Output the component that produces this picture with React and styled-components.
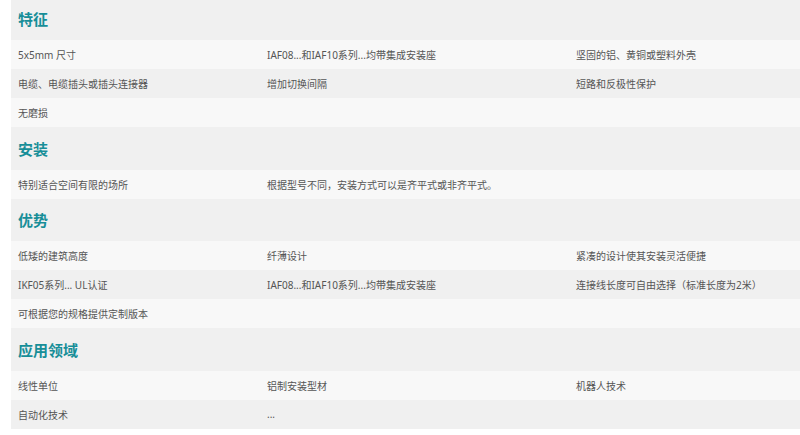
import React from 'react';
import styled, { createGlobalStyle } from 'styled-components';

const GlobalStyle = createGlobalStyle`
  html, body {
    margin: 0;
    padding: 0;
    background: #fff;
    overflow: hidden;
  }
  body {
    font-family: "Noto Sans", "Noto Sans CJK SC", sans-serif;
  }
`;

const Wrapper = styled.div`
  margin: -2.5px 0 0 11px;
  width: 800px;
`;

const SectionHeader = styled.div`
  height: 42.5px;
  display: flex;
  align-items: center;
  padding-left: 7px;
  background: #f0f0f0;
  color: #178e98;
  font-size: 15px;
  font-weight: 700;
  font-family: "Noto Sans CJK SC", sans-serif;
`;

const Row = styled.div`
  display: grid;
  grid-template-columns: 249px 309px 1fr;
  height: 29px;
  align-items: center;
  background: ${p => (p.$alt ? '#f0f0f0' : '#f8f8f8')};
`;

const Cell = styled.div`
  padding-left: 7px;
  font-size: 10px;
  color: #555;
  white-space: nowrap;
  font-family: "Noto Sans", "Noto Sans CJK SC", sans-serif;
`;

const sections = [
  {
    title: '特征',
    rows: [
      ['5x5mm 尺寸', 'IAF08...和IAF10系列...均带集成安装座', '坚固的铝、黄铜或塑料外壳'],
      ['电缆、电缆插头或插头连接器', '增加切换间隔', '短路和反极性保护'],
      ['无磨损', '', ''],
    ],
  },
  {
    title: '安装',
    rows: [['特别适合空间有限的场所', '根据型号不同，安装方式可以是齐平式或非齐平式。', '']],
  },
  {
    title: '优势',
    rows: [
      ['低矮的建筑高度', '纤薄设计', '紧凑的设计使其安装灵活便捷'],
      ['IKF05系列... UL认证', 'IAF08...和IAF10系列...均带集成安装座', '连接线长度可自由选择（标准长度为2米）'],
      ['可根据您的规格提供定制版本', '', ''],
    ],
  },
  {
    title: '应用领域',
    rows: [
      ['线性单位', '铝制安装型材', '机器人技术'],
      ['自动化技术', '...', ''],
    ],
  },
];

export default function App() {
  return (
    <>
      <GlobalStyle />
      <Wrapper>
        {sections.map(s => (
          <section key={s.title}>
            <SectionHeader>{s.title}</SectionHeader>
            {s.rows.map((r, i) => (
              <Row key={i} $alt={i % 2 === 1}>
                {r.map((c, j) => (
                  <Cell key={j}>{c}</Cell>
                ))}
              </Row>
            ))}
          </section>
        ))}
      </Wrapper>
    </>
  );
}
